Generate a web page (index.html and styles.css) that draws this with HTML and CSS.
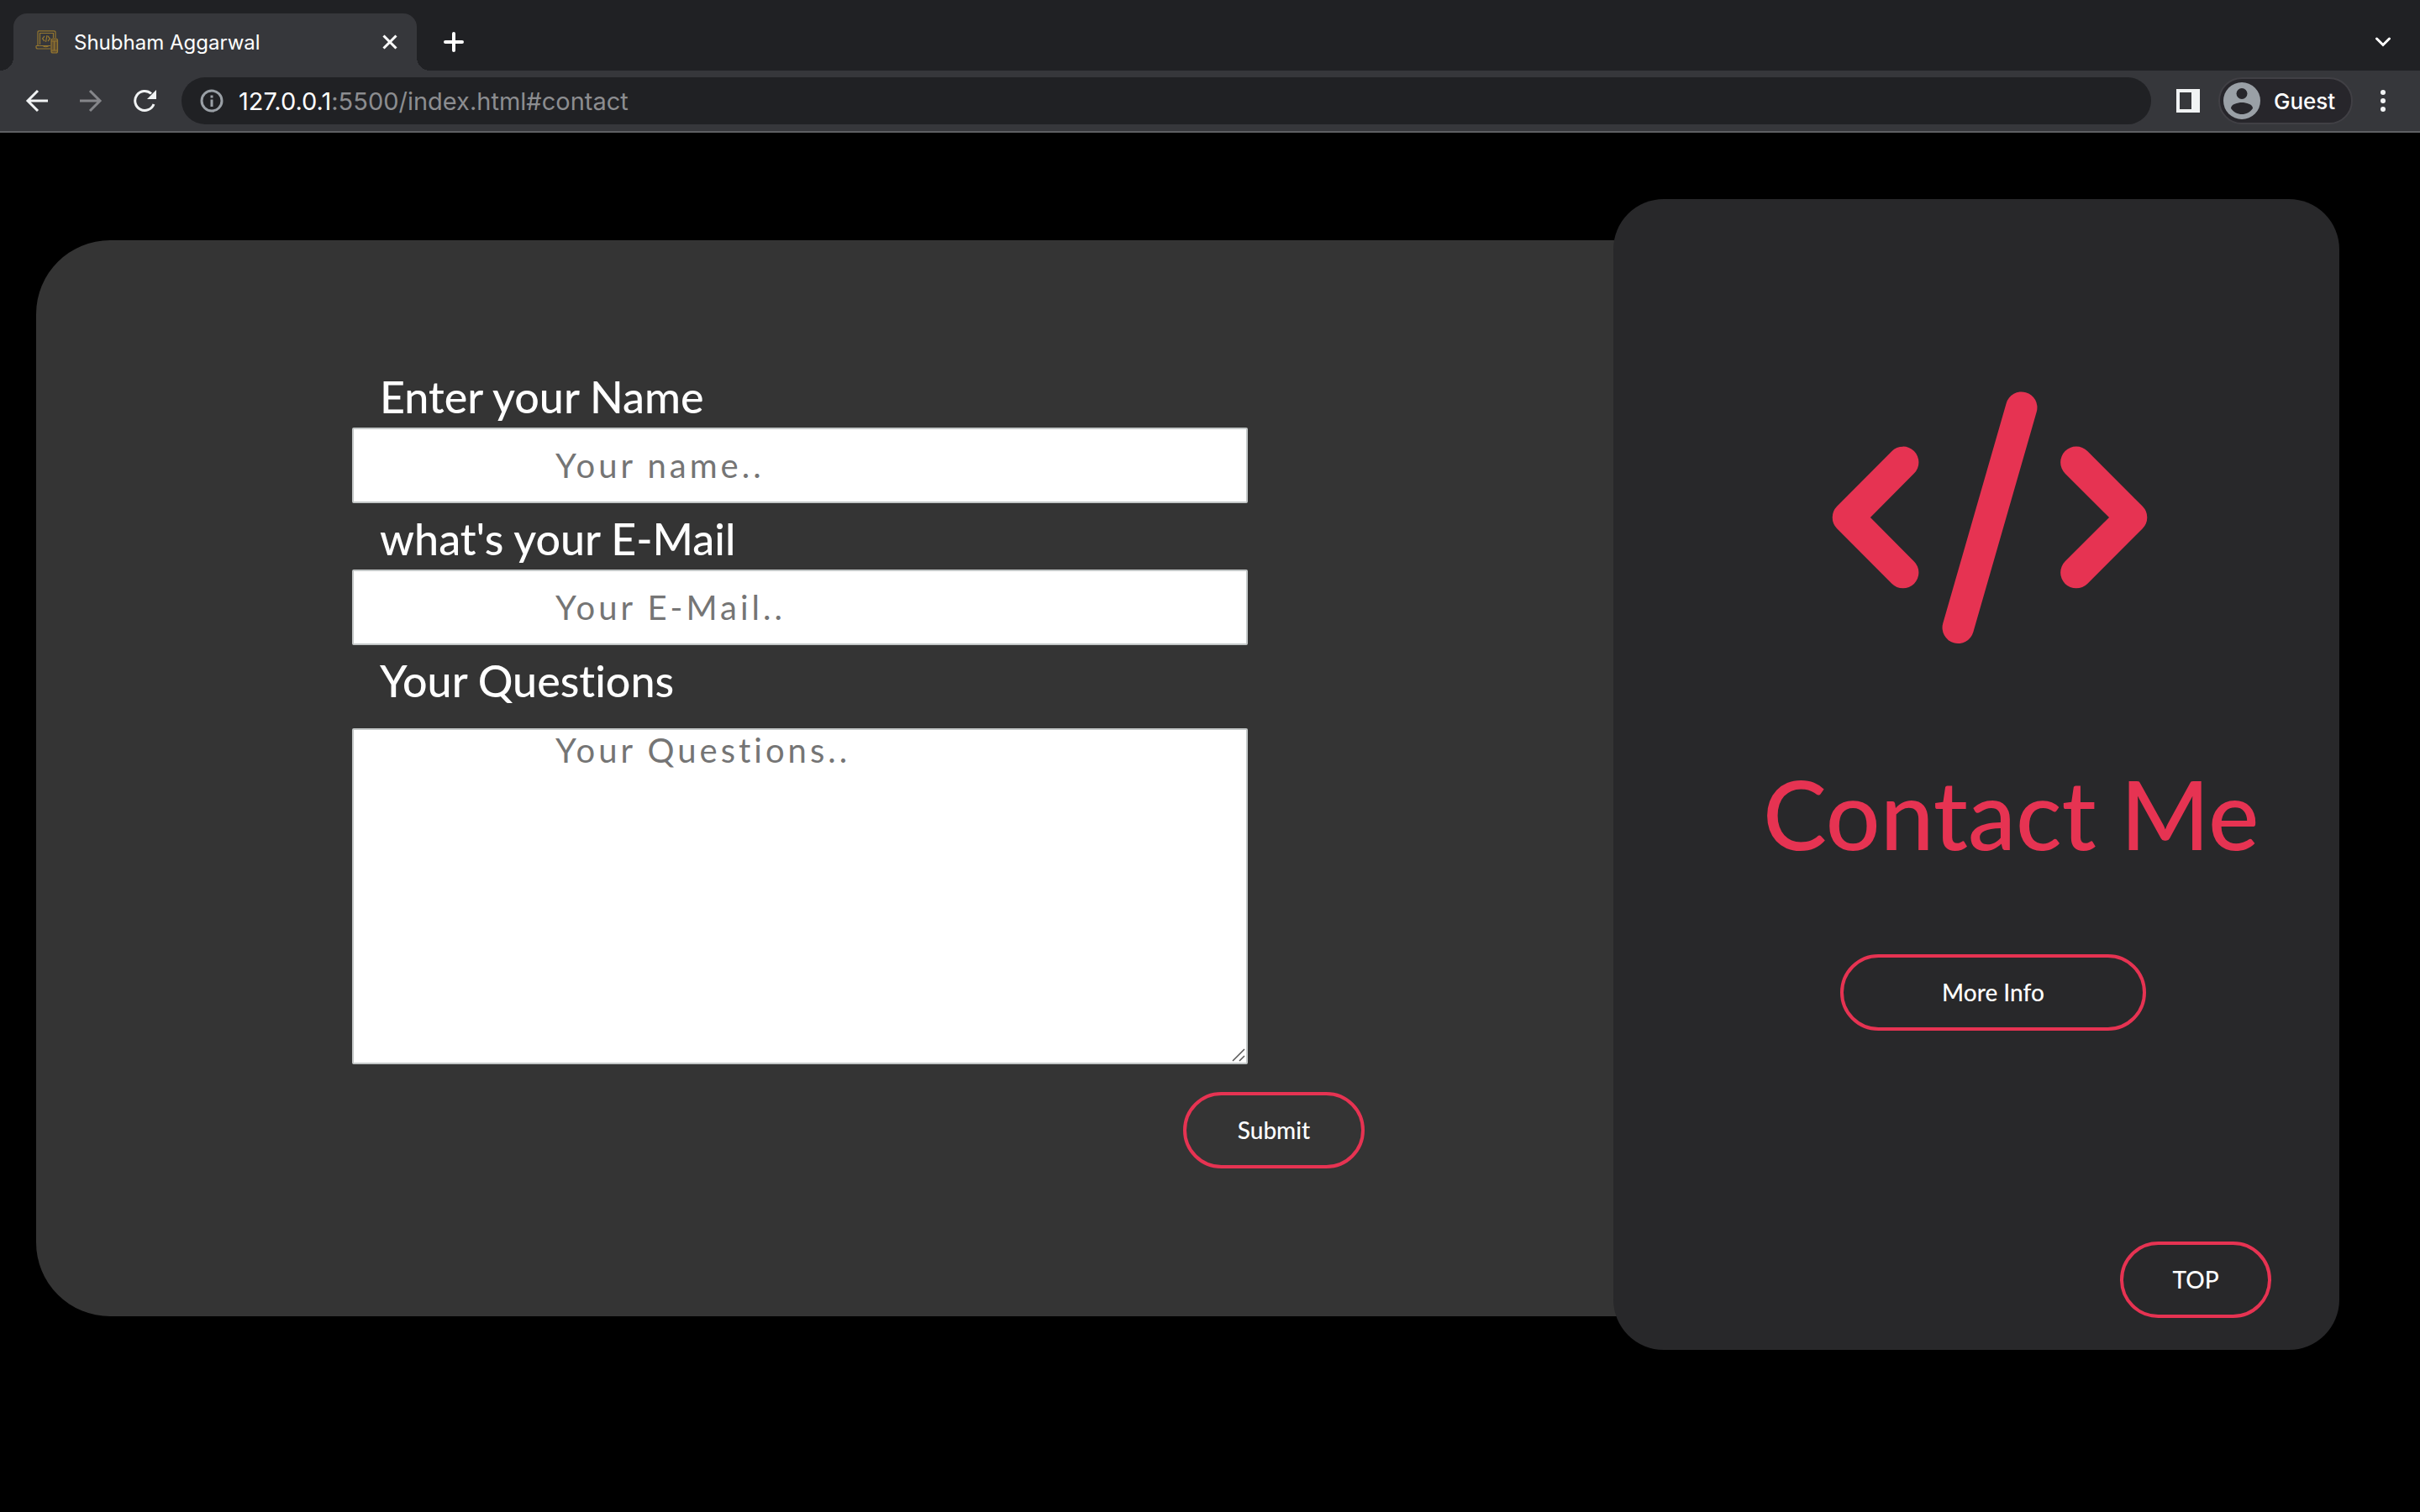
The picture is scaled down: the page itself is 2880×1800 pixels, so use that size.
FILE: index.html
```html
<!DOCTYPE html>
<html lang="en">
<head>
<meta charset="utf-8">
<title>Shubham Aggarwal</title>
<link rel="stylesheet" href="styles.css">
</head>
<body>
<header class="browser">
  <div class="tabstrip">
    <div class="tab">
      <svg class="favicon" viewBox="0 0 28 28" fill="none" stroke="#94762f" stroke-width="1.2">
        <path d="M3 18V2Q3 .8 4 .8H22Q24 .8 24 2.500V9M5.500 17V3.500H21.500V9M1 18.500H18M1 18.500V20Q1 22 3 22H18M9 18.500Q12.500 21 16 18.500"/>
        <path d="M11 7L8.500 10L11 13M15 7L17.500 10L15 13M14 6L12.500 14"/>
        <rect x="19" y="10" width="7.500" height="17" rx="2" fill="#604f32"/><path d="M19 13H26M19 24H26M22.500 13V24"/>
      </svg>
      <span class="tab-title">Shubham Aggarwal</span>
      <button class="icon-button" type="button" aria-label="Close tab"><svg width="18" height="18" viewBox="0 0 18 18" fill="none" stroke="#fff" stroke-width="3"><path d="M1.500 1.500L16.500 16.500M16.500 1.500L1.500 16.500"/></svg></button>
    </div>
    <button class="icon-button new-tab" type="button" aria-label="New tab"><svg width="24" height="24" viewBox="0 0 24 24" fill="none" stroke="#fff" stroke-width="4" stroke-linecap="round"><path d="M12 2V22M2 12H22"/></svg></button>
    <button class="icon-button tab-search" type="button" aria-label="Search tabs"><svg width="20" height="12" viewBox="0 0 20 12" fill="none" stroke="#fff" stroke-width="3" stroke-linecap="round"><path d="M2.500 2L10 9.500L17.500 2"/></svg></button>
  </div>
  <div class="toolbar">
    <nav class="nav-buttons">
      <button class="icon-button" type="button" aria-label="Back"><svg width="28" height="28" viewBox="0 0 28 28" fill="none" stroke="#f1f3f4" stroke-width="3"><path d="M27 14H3M15 2L3 14L15 26"/></svg></button>
      <button class="icon-button" type="button" aria-label="Forward"><svg width="28" height="28" viewBox="0 0 28 28" fill="none" stroke="#85868a" stroke-width="3"><path d="M1 14H25M13 2L25 14L13 26"/></svg></button>
      <button class="icon-button" type="button" aria-label="Reload"><svg width="28" height="28" viewBox="0 0 28 28"><path d="M25 18A11.500 11.500 0 1 1 22 5.500" fill="none" stroke="#f1f3f4" stroke-width="3"/><path d="M28 1V12H17Z" fill="#f1f3f4"/></svg></button>
    </nav>
    <div class="omnibox">
      <svg width="28" height="28" viewBox="0 0 28 28" fill="none" stroke="#9aa0a6" stroke-width="3"><circle cx="14" cy="14" r="12"/><path d="M14 12.500V21M14 7.500V10.500"/></svg>
      <span class="url"><span class="host">127.0.0.1</span>:5500/index.html#contact</span>
    </div>
    <button class="icon-button side-panel" type="button" aria-label="Side panel"><svg width="28" height="28" viewBox="0 0 28 28"><path d="M0 0H28V28H0ZM4 4V24H18V4Z" fill="#f1f3f4" fill-rule="evenodd"/></svg></button>
    <button class="profile" type="button">
      <svg width="44" height="44" viewBox="0 0 44 44"><circle cx="22" cy="22" r="22" fill="#9aa0a6"/><circle cx="22" cy="13.500" r="6.500" fill="#27262b"/><path d="M9 31C9 26 17 24 22 24S35 26 35 31C32 35.500 27 38 22 38S12 35.500 9 31Z" fill="#27262b"/></svg>
      <span>Guest</span>
    </button>
    <button class="icon-button menu" type="button" aria-label="Menu"><svg width="8" height="28" viewBox="0 0 8 28" fill="#f1f3f4"><circle cx="4" cy="4" r="3"/><circle cx="4" cy="14" r="3"/><circle cx="4" cy="24" r="3"/></svg></button>
  </div>
</header>

<main class="contact" id="contact">
  <section class="form-panel">
    <form class="contact-form">
      <label for="name">Enter your Name</label>
      <input class="field" id="name" type="text" placeholder="Your name..">
      <label for="email">what's your E-Mail</label>
      <input class="field" id="email" type="text" placeholder="Your E-Mail..">
      <label for="questions">Your Questions</label>
      <div class="questions">
        <textarea class="field" id="questions" placeholder="Your Questions.."></textarea>
        <svg class="grip" viewBox="0 0 16 16" stroke="#555" stroke-width="1.500" aria-hidden="true"><path d="M1 15L15 1M9 15L15 9"/></svg>
      </div>
      <button class="pill submit" type="submit">Submit</button>
    </form>
  </section>
  <aside class="info-card">
    <svg class="code-icon" viewBox="245 162 919 736" fill="none" stroke="#e63352" stroke-width="92" stroke-linecap="round" stroke-linejoin="round"><path d="M451 369L291 530L451 691M797 209L612 852M957 369L1118 530L957 691"/></svg>
    <h1>Contact Me</h1>
    <button class="pill more" type="button">More Info</button>
    <a class="pill top" href="#contact">TOP</a>
  </aside>
</main>
</body>
</html>
```
FILE: styles.css
```css
* {
  box-sizing: border-box;
}

body {
  margin: 0;
  background: #000;
  color: #fff;
  font-family: Lato, sans-serif;
  font-variant-ligatures: none;
}

button {
  font: inherit;
  color: inherit;
  cursor: pointer;
}

svg {
  display: block;
  flex: none;
}

/* Browser bar */
.browser {
  background: #36373b;
  border-bottom: 2px solid #5f6063;
  font-family: Inter, sans-serif;
}

.tabstrip {
  display: flex;
  align-items: center;
  height: 84px;
  padding: 16px 26px 0 16px;
  background: #202124;
}

.tab {
  position: relative;
  display: flex;
  align-items: center;
  width: 480px;
  height: 68px;
  padding: 0 23px 0 26px;
  background: #36373b;
  border-radius: 16px 16px 0 0;
  font-size: 24px;
}

.tab::before,
.tab::after {
  content: "";
  position: absolute;
  bottom: 0;
  width: 16px;
  height: 16px;
}

.tab::before {
  right: 100%;
  background: radial-gradient(circle at 0 0, #202124 16px, #36373b 16px);
}

.tab::after {
  left: 100%;
  background: radial-gradient(circle at 100% 0, #202124 16px, #36373b 16px);
}

.favicon {
  width: 28px;
  height: 28px;
}

.tab-title {
  flex: 1;
  padding-left: 18px;
}

.icon-button {
  padding: 0;
  border: 0;
  background: none;
}

.new-tab {
  margin-left: 32px;
}

.tab-search {
  margin-left: auto;
  margin-right: 8px;
}

.toolbar {
  display: flex;
  align-items: center;
  height: 72px;
  padding: 0 40px 0 30px;
}

.nav-buttons {
  display: flex;
  gap: 36px;
}

.omnibox {
  display: flex;
  flex: 1;
  align-items: center;
  gap: 18px;
  height: 56px;
  margin-left: 30px;
  padding: 0 22px;
  border-radius: 28px;
  background: #202124;
}

.url {
  color: #8c8d90;
  font-size: 29px;
}

.host {
  color: #fff;
}

.side-panel {
  margin-left: 30px;
}

.profile {
  display: flex;
  align-items: center;
  gap: 16px;
  width: 160px;
  height: 56px;
  margin-left: 22px;
  padding: 0 4px;
  border: 2px solid #414045;
  border-radius: 28px;
  background: #27262b;
  font-size: 26px;
  font-weight: 500;
}

.menu {
  margin-left: 32px;
}

/* Contact section */
.contact {
  display: flex;
  align-items: flex-start;
  padding: 79px 96px 80px 43px;
}

.form-panel {
  flex: 1;
  min-height: 1280px;
  margin-top: 49px;
  margin-right: -60px;
  padding: 158px 0 176px 376px;
  border-radius: 88px 0 0 88px;
  background: #343434;
}

.contact-form {
  display: flex;
  flex-direction: column;
  max-width: 1205px;
}

label {
  height: 65px;
  padding-left: 33px;
  font-size: 52px;
  font-weight: 500;
  line-height: 56px;
}

.field {
  width: 1066px;
  height: 90px;
  margin: 0 0 14px;
  padding: 0 240px;
  border: 2px solid #c4c8c8;
  border-radius: 2px;
  background: #fff;
  color: #333;
  font: 40px Lato, sans-serif;
  letter-spacing: 4px;
}

.field::placeholder {
  color: #757575;
  opacity: 1;
}

.questions {
  position: relative;
  width: 1066px;
  margin: 20px 0 33px;
}

.questions .field {
  display: block;
  height: 400px;
  margin: 0;
}

.questions .field::-webkit-resizer {
  display: none;
}

.grip {
  position: absolute;
  right: 3px;
  bottom: 3px;
  width: 16px;
  height: 16px;
  pointer-events: none;
}

.pill {
  display: flex;
  align-items: center;
  justify-content: center;
  height: 91px;
  padding: 0 0 2px;
  border: 4px solid #e63352;
  border-radius: 46px;
  background: transparent;
  color: #fff;
  font-size: 28px;
  font-weight: 500;
  text-decoration: none;
}

.submit {
  align-self: flex-end;
  width: 216px;
}

.info-card {
  position: relative;
  display: flex;
  flex-direction: column;
  align-items: flex-start;
  width: 864px;
  min-height: 1370px;
  padding: 229px 81px 38px 80px;
  border-radius: 60px;
  background: #28282a;
}

.code-icon {
  width: 376px;
  height: 300px;
  margin-left: 180px;
}

h1 {
  margin: 134px 0 100px 98px;
  color: #e63352;
  font-size: 114px;
  font-weight: 500;
  line-height: 136px;
}

.more {
  width: 364px;
  margin-left: 190px;
}

.top {
  align-self: flex-end;
  width: 180px;
  margin-top: auto;
}
```
